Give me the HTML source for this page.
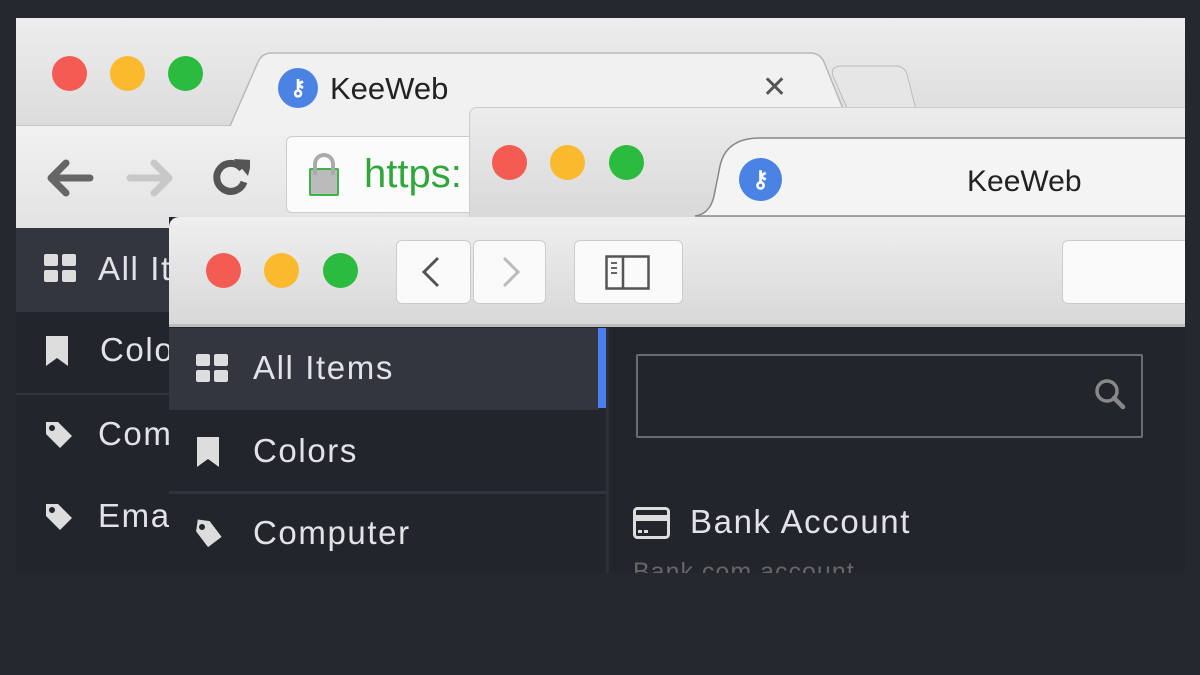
<!DOCTYPE html>
<html><head><meta charset="utf-8"><style>
*{margin:0;padding:0;box-sizing:border-box}
body{width:1200px;height:675px;background:#262830;position:relative;overflow:hidden;font-family:"Liberation Sans",sans-serif}
.abs{position:absolute}
.dot{position:absolute;width:35px;height:35px;border-radius:50%}
.r{background:#f45b52}.y{background:#fbb92e}.g{background:#2bbb3f}
.txt{color:#e2e3e6;font-size:33px;letter-spacing:1.6px;white-space:nowrap}
</style></head><body>
<!-- Layer 1 chrome -->
<div class="abs" style="left:16px;top:18px;width:1169px;height:555px;background:#23252c"></div>
<div class="abs" style="left:16px;top:18px;width:1169px;height:107px;background:linear-gradient(#ededed,#dcdcdc)"></div>
<div class="abs" style="left:16px;top:125px;width:1169px;height:103px;background:linear-gradient(#f1f1f1,#e3e3e3);border-top:1px solid #c4c4c4"></div>
<div class="dot r" style="left:52px;top:56px"></div><div class="dot y" style="left:110px;top:56px"></div><div class="dot g" style="left:168px;top:56px"></div>
<svg class="abs" style="left:200px;top:50px" width="740" height="78"><path d="M30 76 L58 12 Q62 3 72 3 L610 3 Q620 3 624 12 L650 76" fill="#f1f1f1" stroke="#b8b8b8" stroke-width="1.5"/><path d="M655 76 L633 26 Q630 17 640 16 L696 16 Q704 16 707 24 L720 76" fill="#e6e6e6" stroke="#bbb"/></svg>
<div class="abs" style="left:278px;top:68px;width:40px;height:40px;border-radius:50%;background:#4a83e4;color:#fff;font-size:22px;text-align:center;line-height:40px;font-weight:bold">⚷</div>
<div class="abs" style="left:330px;top:71px;font-size:31px;color:#222">KeeWeb</div>
<div class="abs" style="left:762px;top:70px;font-size:30px;color:#555">✕</div>
<svg class="abs" style="left:40px;top:150px" width="210" height="56"><path d="M50 28H12M26 13L11 28L26 43" stroke="#666" stroke-width="7" fill="none" stroke-linecap="round" stroke-linejoin="round"/><path d="M90 28H128M114 13L129 28L114 43" stroke="#c8c8c8" stroke-width="7" fill="none" stroke-linecap="round" stroke-linejoin="round"/><path d="M202 19A14 14 0 1 0 204 32" stroke="#555" stroke-width="7" fill="none"/><path d="M194 9L212 10L208 26Z" fill="#555"/></svg>
<div class="abs" style="left:286px;top:136px;width:200px;height:77px;background:#fbfbfb;border:1px solid #ccc;border-radius:6px"></div>
<div class="abs" style="left:309px;top:168px;width:30px;height:28px;background:#bbb;border:2px solid #3bb54a;border-radius:2px"></div>
<div class="abs" style="left:313px;top:153px;width:22px;height:22px;border:4px solid #aaa;border-bottom:none;border-radius:11px 11px 0 0"></div>
<div class="abs" style="left:364px;top:152px;font-size:40px;color:#2ea83a">https:</div>
<div class="abs" style="left:16px;top:228px;width:153px;height:84px;background:#33363f"></div>
<svg class="abs" style="left:44px;top:254px" width="34" height="30"><g fill="#ddd"><rect x="0" y="0" width="14" height="12" rx="2"/><rect x="18" y="0" width="14" height="12" rx="2"/><rect x="0" y="16" width="14" height="12" rx="2"/><rect x="18" y="16" width="14" height="12" rx="2"/></g></svg>
<div class="abs txt" style="left:98px;top:250px">All It</div>
<svg class="abs" style="left:46px;top:336px" width="24" height="30"><path d="M0 0H22V30L11 22L0 30Z" fill="#ddd"/></svg>
<div class="abs txt" style="left:100px;top:331px">Colo</div>
<div class="abs" style="left:16px;top:393px;width:153px;height:2px;background:#32353d"></div>
<svg class="abs" style="left:44px;top:420px" width="30" height="32"><path d="M2 2H14L28 16L16 28L2 14Z" fill="#ddd"/><circle cx="8" cy="8" r="3" fill="#23252c"/></svg>
<div class="abs txt" style="left:98px;top:415px">Com</div>
<svg class="abs" style="left:44px;top:502px" width="30" height="32"><path d="M2 2H14L28 16L16 28L2 14Z" fill="#ddd"/><circle cx="8" cy="8" r="3" fill="#23252c"/></svg>
<div class="abs txt" style="left:98px;top:497px">Ema</div>
<!-- Layer 2 -->
<div class="abs" style="left:469px;top:107px;width:716px;height:110px;overflow:hidden;background:linear-gradient(#ececec,#d9d9d9);border-radius:8px 0 0 0;border-top:1px solid #ccc;border-left:1px solid #ccc">
<svg class="abs" style="left:220px;top:28px" width="500" height="82"><path d="M5 80 Q20 78 24 60 L30 30 Q36 2 70 2 L520 2 L520 80Z" fill="#f4f4f4" stroke="#888" stroke-width="1.5"/></svg>
</div>
<div class="dot r" style="left:492px;top:145px"></div><div class="dot y" style="left:550px;top:145px"></div><div class="dot g" style="left:609px;top:145px"></div>
<div class="abs" style="left:739px;top:158px;width:43px;height:43px;border-radius:50%;background:#4a83e4;color:#fff;font-size:23px;text-align:center;line-height:43px;font-weight:bold">⚷</div>
<div class="abs" style="left:967px;top:165px;font-size:30px;color:#222">KeeWeb</div>
<!-- Layer 3 -->
<div class="abs" style="left:169px;top:217px;width:1016px;height:356px;background:#23252c"></div>
<div class="abs" style="left:169px;top:217px;width:1016px;height:110px;background:linear-gradient(#efefef,#d8d8d8);border-radius:10px 0 0 0;border-bottom:3px solid #bdbdbd"></div>
<div class="dot r" style="left:206px;top:253px"></div><div class="dot y" style="left:264px;top:253px"></div><div class="dot g" style="left:323px;top:253px"></div>
<div class="abs" style="left:396px;top:240px;width:75px;height:64px;background:#fafafa;border:1px solid #ccc;border-radius:6px"></div>
<div class="abs" style="left:473px;top:240px;width:73px;height:64px;background:#fafafa;border:1px solid #ccc;border-radius:6px"></div>
<svg class="abs" style="left:396px;top:240px" width="150" height="64"><path d="M42 18L28 32L42 46" stroke="#555" stroke-width="3" fill="none"/><path d="M108 18L122 32L108 46" stroke="#bbb" stroke-width="3" fill="none"/></svg>
<div class="abs" style="left:574px;top:240px;width:109px;height:64px;background:#fafafa;border:1px solid #ccc;border-radius:6px"></div>
<svg class="abs" style="left:605px;top:255px" width="46" height="36"><rect x="1.5" y="1.5" width="42" height="32" fill="none" stroke="#555" stroke-width="2.5"/><line x1="18" y1="1" x2="18" y2="34" stroke="#555" stroke-width="2.5"/><g stroke="#666" stroke-width="2"><line x1="6" y1="8" x2="12" y2="8"/><line x1="6" y1="13" x2="12" y2="13"/><line x1="6" y1="18" x2="12" y2="18"/></g></svg>
<div class="abs" style="left:1062px;top:240px;width:123px;height:64px;background:#fafafa;border:1px solid #ccc;border-right:none;border-radius:6px 0 0 6px"></div>
<div class="abs" style="left:169px;top:328px;width:430px;height:82px;background:#33363f"></div>
<div class="abs" style="left:598px;top:328px;width:8px;height:80px;background:#4b7ff0"></div>
<div class="abs" style="left:606px;top:328px;width:3px;height:245px;background:#2d3037"></div>
<svg class="abs" style="left:196px;top:354px" width="34" height="30"><g fill="#ddd"><rect x="0" y="0" width="14" height="12" rx="2"/><rect x="18" y="0" width="14" height="12" rx="2"/><rect x="0" y="16" width="14" height="12" rx="2"/><rect x="18" y="16" width="14" height="12" rx="2"/></g></svg>
<div class="abs txt" style="left:253px;top:349px">All Items</div>
<svg class="abs" style="left:197px;top:437px" width="24" height="30"><path d="M0 0H22V30L11 22L0 30Z" fill="#ddd"/></svg>
<div class="abs txt" style="left:253px;top:432px">Colors</div>
<div class="abs" style="left:169px;top:491px;width:438px;height:3px;background:#31343c"></div>
<svg class="abs" style="left:194px;top:519px" width="32" height="34"><path d="M2 2H14L28 16L16 28L2 14Z" fill="#ddd" transform="rotate(8 14 14)"/><circle cx="8" cy="8" r="3" fill="#23252c"/></svg>
<div class="abs txt" style="left:253px;top:514px">Computer</div>
<div class="abs" style="left:636px;top:354px;width:507px;height:84px;border:2px solid #6a6c72;border-radius:2px"></div>
<svg class="abs" style="left:1090px;top:376px" width="40" height="40"><circle cx="17" cy="15" r="10" stroke="#888" stroke-width="3.5" fill="none"/><line x1="24" y1="22" x2="33" y2="31" stroke="#888" stroke-width="4.5" stroke-linecap="round"/></svg>
<svg class="abs" style="left:633px;top:507px" width="38" height="34"><rect x="1.5" y="1.5" width="34" height="29" rx="3" fill="none" stroke="#ddd" stroke-width="3"/><rect x="1" y="8" width="35" height="6" fill="#ddd"/><rect x="5" y="23" width="4" height="3" fill="#ddd"/><rect x="11" y="23" width="4" height="3" fill="#ddd"/></svg>
<div class="abs txt" style="left:690px;top:503px">Bank Account</div>
<div class="abs" style="left:633px;top:555px;height:18px;overflow:hidden;font-size:25px;letter-spacing:1px;color:#666;line-height:34px">Bank.com account</div>
</body></html>
